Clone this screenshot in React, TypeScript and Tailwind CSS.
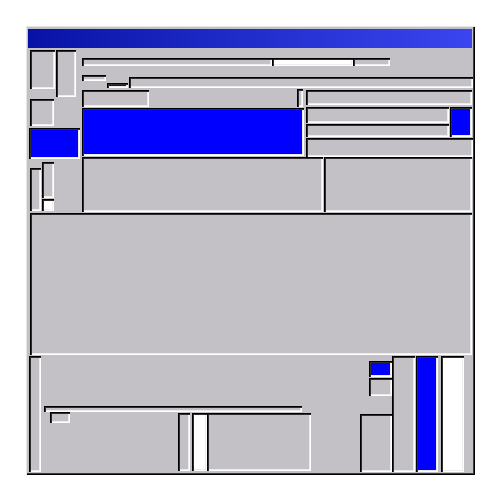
import React from 'react';
import clsx from 'clsx';

// sunken bevel: dark top-left, light bottom-right
const sunken =
  'shadow-[inset_1px_1px_0_#000,inset_2px_2px_0_#2e2e2e,inset_-1px_-1px_0_#fff,inset_-2px_-2px_0_#ececec]';

type PanelProps = {
  className?: string;
  tone?: 'gray' | 'blue' | 'white';
};

const Panel: React.FC<PanelProps> = ({ className, tone = 'gray' }) => (
  <div
    className={clsx(
      'shrink-0',
      sunken,
      tone === 'gray' && 'bg-[#c3c1c6]',
      tone === 'blue' && 'bg-[#0000fe]',
      tone === 'white' && 'bg-white',
      className
    )}
  />
);

const LeftColumn = () => (
  <div className="flex w-[54px] shrink-0 flex-col">
    <div className="mt-[2px] flex items-start">
      <Panel className="ml-[2px] h-[39px] w-[25px]" />
      <Panel className="ml-[1px] h-[47px] w-[20px]" />
    </div>
    <Panel className="ml-[2px] mt-[2px] h-[27px] w-[24px]" />
    <Panel tone="blue" className="ml-[1px] mt-[2px] h-[31px] w-[51px]" />
    <div className="ml-[2px] mt-[3px] flex items-start">
      <Panel className="mt-[6px] h-[43px] w-[11px]" />
      <div className="ml-[1px] flex flex-col">
        <Panel className="h-[36px] w-[12px]" />
        <Panel tone="white" className="mt-[1px] h-[12px] w-[12px]" />
      </div>
    </div>
  </div>
);

const RightArea = () => (
  <div className="flex w-[390px] shrink-0 flex-col">
    {/* row 1 */}
    <div className="mt-[10px] flex h-[8px]">
      <Panel className="h-[8px] w-[190px]" />
      <Panel tone="white" className="h-[8px] w-[81px]" />
      <Panel className="h-[8px] w-[37px]" />
    </div>
    {/* row 2 */}
    <div className="flex h-[24px] items-start">
      <Panel className="mt-[9px] h-[6px] w-[24px]" />
      <Panel tone="blue" className="ml-[1px] mt-[17px] h-[5px] w-[21px]" />
      <Panel className="ml-[1px] mt-[11px] h-[11px] w-[344px]" />
    </div>
    {/* row 3 */}
    <div className="flex h-[67px] items-start">
      <div className="flex w-[223px] shrink-0 flex-col">
        <div className="flex h-[18px] items-start">
          <Panel className="h-[17px] w-[67px]" />
          <Panel className="-mt-[1px] ml-[148px] h-[18px] w-[6px]" />
        </div>
        <Panel tone="blue" className="h-[48px] w-[222px]" />
      </div>
      <div className="ml-[1px] flex w-[167px] shrink-0 flex-col">
        <Panel className="h-[15px] w-[166px]" />
        <div className="mt-[2px] flex items-start">
          <div className="flex w-[143px] flex-col">
            <Panel className="h-[16px] w-[143px]" />
            <Panel className="mt-[1px] h-[13px] w-[143px]" />
          </div>
          <Panel tone="blue" className="ml-[1px] h-[30px] w-[22px]" />
        </div>
        <Panel className="mt-[1px] h-[19px] w-[167px]" />
      </div>
    </div>
    {/* row 4 */}
    <div className="flex h-[55px]">
      <Panel className="h-[55px] w-[241px]" />
      <Panel className="ml-[1px] h-[55px] w-[148px]" />
    </div>
  </div>
);

const BottomArea = () => (
  <div className="mt-[1px] flex h-[116px]">
    <Panel className="ml-[1px] h-[116px] w-[12px]" />
    <div className="flex w-[351px] shrink-0">
      <div className="flex w-[319px] shrink-0 flex-col">
        <Panel className="ml-[3px] mt-[50px] h-[6px] w-[258px]" />
        <div className="flex items-start">
          <Panel className="ml-[9px] h-[11px] w-[20px]" />
          <Panel className="ml-[108px] mt-[1px] h-[58px] w-[12px]" />
          <Panel tone="white" className="ml-[2px] mt-[1px] h-[58px] w-[15px]" />
          <Panel className="mt-[1px] h-[58px] w-[104px]" />
        </div>
      </div>
      <div className="flex w-[32px] shrink-0 flex-col">
        <Panel tone="blue" className="ml-[9px] mt-[5px] h-[16px] w-[23px]" />
        <Panel className="ml-[9px] mt-[1px] h-[18px] w-[23px]" />
        <Panel className="mt-auto h-[58px] w-[32px]" />
      </div>
    </div>
    <Panel className="h-[116px] w-[23px]" />
    <Panel tone="blue" className="ml-[1px] h-[116px] w-[22px]" />
    <Panel tone="white" className="ml-[3px] h-[116px] w-[23px]" />
  </div>
);

export default function App() {
  return (
    <div className="h-[500px] w-[500px] bg-white pl-[26px] pt-[26px]">
      <div className="flex h-[449px] w-[449px] flex-col bg-[#c3c1c6] p-[2px] shadow-[inset_1px_1px_0_#e6e6e6,inset_-1px_-1px_0_#000,inset_-2px_-2px_0_#3a3a3a]">
        <div className="mt-[1px] h-[19px] w-[444px] shrink-0 bg-linear-to-r from-[#0811a6] to-[#3a45f0]" />
        <div className="flex h-[164px] shrink-0">
          <LeftColumn />
          <RightArea />
        </div>
        <Panel className="ml-[2px] mt-[1px] h-[142px] w-[442px]" />
        <BottomArea />
      </div>
    </div>
  );
}
